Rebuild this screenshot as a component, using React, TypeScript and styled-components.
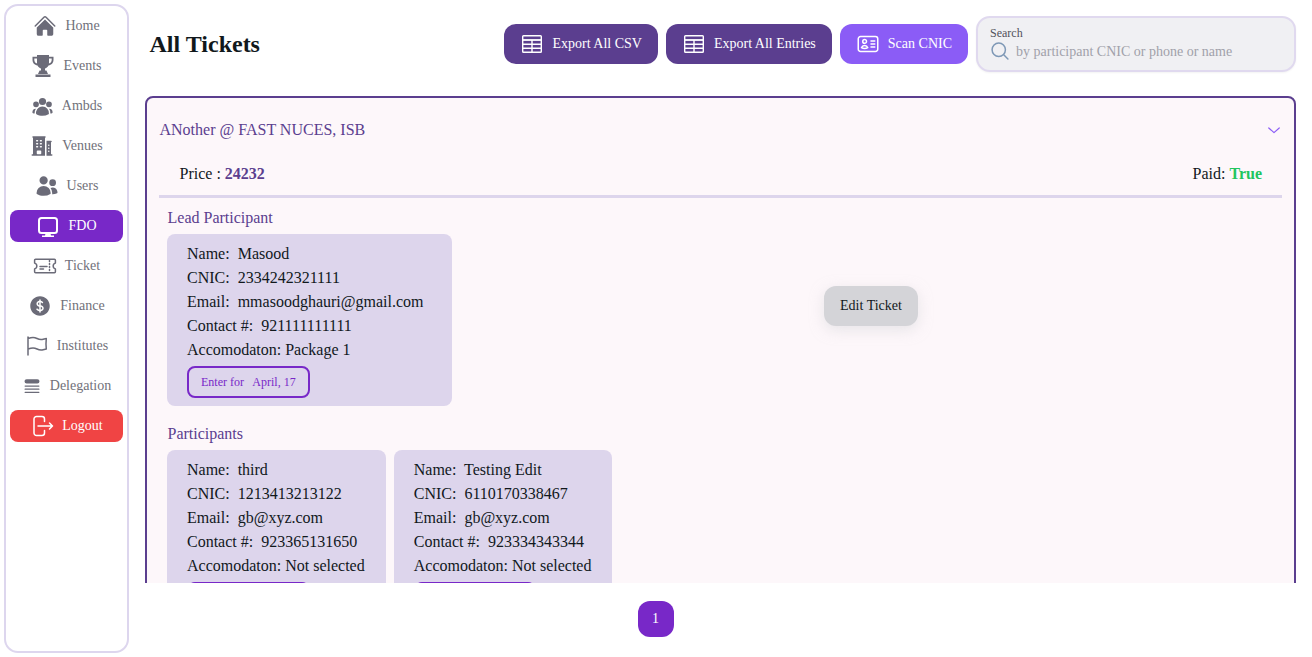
import React from "react";
import styled, { createGlobalStyle } from "styled-components";
import {
  HiHome, HiUserGroup, HiBuildingOffice2, HiUsers, HiCurrencyDollar, HiQueueList,
  HiOutlineFlag, HiOutlineIdentification,
} from "react-icons/hi2";

const Global = createGlobalStyle`
  html, body { margin: 0; padding: 0; background: #fff; }
  body { font-family: "Liberation Serif", "Times New Roman", serif; color: #11181c; }
  * { box-sizing: border-box; }
`;

const Page = styled.div`
  display: flex;
  width: 1312px;
  height: 657px;
  overflow: hidden;
`;

const Sidebar = styled.nav`
  width: 125px;
  height: 649px;
  margin: 4px 0 0 4px;
  padding: 4px;
  border: 2px solid #ddd6ee;
  border-radius: 14px;
  display: flex;
  flex-direction: column;
  gap: 8px;
  flex-shrink: 0;
`;

const NavItem = styled.a<{ $bg?: string; $icon?: number }>`
  height: 32px;
  border-radius: 8px;
  display: flex;
  align-items: center;
  justify-content: center;
  gap: 8px;
  font-size: 14px;
  background: ${(p) => p.$bg ?? "transparent"};
  color: ${(p) => (p.$bg ? "#fff" : "#71717a")};
  svg {
    width: ${(p) => p.$icon ?? 24}px;
    height: ${(p) => p.$icon ?? 24}px;
    flex-shrink: 0;
    color: ${(p) => (p.$bg ? "#fff" : "#6b6b78")};
  }
`;

const Main = styled.main`
  flex: 1;
  min-width: 0;
  display: flex;
  flex-direction: column;
  padding: 16px 16px 0 16px;
`;

const Header = styled.header`
  height: 56px;
  margin-bottom: 24px;
  display: flex;
  align-items: center;
  padding-left: 4.5px;
  gap: 8px;
  flex-shrink: 0;
`;

const Title = styled.h1`
  margin: 0 auto 0 0;
  font-size: 24px;
  font-weight: 700;
  line-height: 32px;
`;

const HeadButton = styled.button<{ $bg: string }>`
  height: 40px;
  padding: 0 16px;
  border: 0;
  border-radius: 12px;
  background: ${(p) => p.$bg};
  color: #fff;
  font: 14px "Liberation Serif", serif;
  display: flex;
  align-items: center;
  gap: 8px;
  svg { width: 24px; height: 24px; flex-shrink: 0; }
`;

const Search = styled.div`
  width: 320px;
  height: 56px;
  padding: 8px 12px;
  border: 2px solid #e0d9ef;
  border-radius: 14px;
  background: #f0f0f3;
  box-shadow: 0 1px 2px rgba(0, 0, 0, 0.05);
  display: flex;
  flex-direction: column;
`;

const SearchLabel = styled.label`
  font-size: 12px;
  line-height: 14px;
  color: #52525b;
`;

const SearchRow = styled.div`
  display: flex;
  align-items: center;
  gap: 6px;
  height: 20px;
  margin-top: 2px;
  font-size: 14px;
  color: #a1a1aa;
  svg { width: 20px; height: 20px; color: #7e98b6; flex-shrink: 0; margin-top: -2px; }
`;

const Scroller = styled.div`
  height: 487px;
  overflow: hidden;
  flex-shrink: 0;
`;

const Card = styled.section`
  border: 2px solid #5b3e8f;
  border-radius: 8px;
  background: #fdf7fa;
  padding: 8px 12px 8px 12px;
`;

const CardTitle = styled.div`
  height: 48px;
  padding-left: 0.5px;
  display: flex;
  align-items: center;
  justify-content: space-between;
  color: #5b3e8f;
  font-size: 16px;
  svg { width: 14px; height: 14px; color: #8b5cf6; margin-right: 1px; }
`;

const PriceRow = styled.div`
  display: flex;
  justify-content: space-between;
  padding: 8px 20px 9px 20.5px;
  font-size: 16px;
  line-height: 24px;
  border-bottom: 3px solid #ddd5ec;
`;

const Strong = styled.b<{ $c: string }>`
  color: ${(p) => p.$c};
`;

const LeadRow = styled.div`
  display: flex;
  align-items: center;
  margin-top: 8px;
`;

const Block = styled.div`
  padding: 0 8px;
`;

const ParticipantsBlock = styled(Block)`
  margin-top: 16px;
`;

const BlockTitle = styled.h3`
  margin: 0 0 4px 0.5px;
  font-size: 16px;
  font-weight: 400;
  line-height: 24px;
  color: #5b3e8f;
`;

const EditSlot = styled.div`
  flex: 1;
  display: flex;
  justify-content: center;
`;

const EditButton = styled.button`
  height: 40px;
  padding: 0 16px;
  border: 0;
  border-radius: 12px;
  background: #d4d4d8;
  color: #11181c;
  font: 14px "Liberation Serif", serif;
  box-shadow: 0 4px 14px rgba(212, 212, 216, 0.5);
`;

const PeopleRow = styled.div`
  display: flex;
  gap: 8px;
`;

const Person = styled.div<{ $minWidth?: number }>`
  min-width: ${(p) => p.$minWidth ?? 0}px;
  padding: 8px 21px 8px 20px;
  border-radius: 8px;
  background: #ddd5ec;
  font-size: 16px;
  line-height: 24px;
`;

const Line = styled.div`
  white-space: pre;
`;

const EnterButton = styled.button`
  display: block;
  height: 32px;
  margin-top: 4px;
  padding: 0 12px;
  border: 2px solid #7828c8;
  border-radius: 8px;
  background: transparent;
  color: #7828c8;
  font: 12px "Liberation Serif", serif;
  white-space: pre;
`;

const Pager = styled.div`
  height: 74px;
  display: flex;
  justify-content: center;
  padding: 18px 130px 0 0;
`;

const PageButton = styled.button`
  width: 36px;
  height: 36px;
  border: 0;
  border-radius: 12px;
  background: #7828c8;
  color: #fff;
  font: 14px "Liberation Serif", serif;
`;

const TableIcon = () => (
  <svg viewBox="0 0 24 24" fill="none" stroke="currentColor" strokeWidth="1.4">
    <rect x="2.7" y="3.7" width="18.6" height="16.6" rx="0.8" />
    <path d="M2.7 8h18.6" strokeWidth="1.8" />
    <path d="M2.7 12.2h18.6M2.7 16.2h18.6M12 8v12" />
  </svg>
);

const TrophyIcon = () => (
  <svg viewBox="0 0 24 24" fill="currentColor">
    <path
      fillRule="evenodd"
      d="M6 1h12v1.800h4.500v3c0 3.100-2 5.400-5 5.700-.7 1.500-1.900 2.500-3.500 2.900v2.100h1.400l1.600 3.500H7l1.600-3.500H10v-2.100c-1.600-.4-2.800-1.400-3.500-2.900-3-.3-5-2.600-5-5.700v-3H6V1zM3.300 4.600v1.200c0 1.900 1 3.300 2.800 3.800-.1-.6-.1-1.200-.1-1.800V4.600H3.300zm17.400 0H18v3.200c0 .6 0 1.200-.1 1.800 1.800-.5 2.800-1.900 2.800-3.800V4.600z"
    />
    <path d="M4.500 20.500h15V23h-15z" />
  </svg>
);

const MonitorIcon = () => (
  <svg viewBox="0 0 24 24" fill="none" stroke="currentColor" strokeWidth="2">
    <rect x="3" y="4" width="18" height="15" rx="2.5" />
    <path d="M9.500 19.500h5l.5 2h3v1.500H6v-1.500h3z" fill="currentColor" stroke="none" />
  </svg>
);

const TicketIcon = () => (
  <svg viewBox="0 0 24 24" fill="none" stroke="currentColor" strokeWidth="1.5" strokeLinejoin="round" strokeLinecap="round">
    <path d="M2.600 5.200h18.800a1 1 0 0 1 1 1v2.900a3 3 0 0 0 0 5.800v2.900a1 1 0 0 1-1 1H2.600a1 1 0 0 1-1-1v-2.900a3 3 0 0 0 0-5.800V6.200a1 1 0 0 1 1-1z" />
    <path d="M7 12.500h7M7 15h3.500M16.500 6.500v1M16.500 9.500v1M16.500 12.500v1M16.500 15.500v1" />
  </svg>
);

const LogoutIcon = () => (
  <svg viewBox="0 0 24 24" fill="none" stroke="currentColor" strokeWidth="1.5" strokeLinecap="round" strokeLinejoin="round">
    <path d="M14.500 7.500V5A2.500 2.500 0 0 0 12 2.500H6.500A2.500 2.500 0 0 0 4 5v14a2.500 2.500 0 0 0 2.500 2.500H12a2.500 2.500 0 0 0 2.500-2.500v-2.500" />
    <path d="M8 12h14.500M19.500 9l3 3-3 3" />
  </svg>
);

const SearchIcon = () => (
  <svg viewBox="0 0 24 24" fill="none" stroke="currentColor" strokeWidth="1.8" strokeLinecap="round">
    <circle cx="10.500" cy="10.500" r="8" />
    <path d="M16.500 16.500l5 5" />
  </svg>
);

const ChevronIcon = () => (
  <svg viewBox="0 0 24 24" fill="none" stroke="currentColor" strokeWidth="2" strokeLinecap="round" strokeLinejoin="round">
    <path d="M3 8.500l9 8 9-8" />
  </svg>
);

const nav: { label: string; icon: React.ReactNode; bg?: string; size?: number }[] = [
  { label: "Home", icon: <HiHome /> },
  { label: "Events", icon: <TrophyIcon /> },
  { label: "Ambds", icon: <HiUserGroup />, size: 23 },
  { label: "Venues", icon: <HiBuildingOffice2 /> },
  { label: "Users", icon: <HiUsers /> },
  { label: "FDO", icon: <MonitorIcon />, bg: "#7828c8" },
  { label: "Ticket", icon: <TicketIcon /> },
  { label: "Finance", icon: <HiCurrencyDollar /> },
  { label: "Institutes", icon: <HiOutlineFlag /> },
  { label: "Delegation", icon: <HiQueueList />, size: 20 },
  { label: "Logout", icon: <LogoutIcon />, bg: "#f04444" },
];

type P = { name: string; cnic: string; email: string; contact: string; acc: string };

const PersonCard = ({ p, minWidth }: { p: P; minWidth?: number }) => (
  <Person $minWidth={minWidth}>
    <Line>{`Name:  ${p.name}`}</Line>
    <Line>{`CNIC:  ${p.cnic}`}</Line>
    <Line>{`Email:  ${p.email}`}</Line>
    <Line>{`Contact #:  ${p.contact}`}</Line>
    <Line>{`Accomodaton: ${p.acc}`}</Line>
    <EnterButton>{"Enter for   April, 17"}</EnterButton>
  </Person>
);

export default function App() {
  return (
    <Page>
      <Global />
      <Sidebar>
        {nav.map((n) => (
          <NavItem key={n.label} $bg={n.bg} $icon={n.size}>
            {n.icon}
            {n.label}
          </NavItem>
        ))}
      </Sidebar>
      <Main>
        <Header>
          <Title>All Tickets</Title>
          <HeadButton $bg="#5b3e8f"><TableIcon />Export All CSV</HeadButton>
          <HeadButton $bg="#5b3e8f"><TableIcon />Export All Entries</HeadButton>
          <HeadButton $bg="#8b5cf6"><HiOutlineIdentification />Scan CNIC</HeadButton>
          <Search>
            <SearchLabel>Search</SearchLabel>
            <SearchRow><SearchIcon />by participant CNIC or phone or name</SearchRow>
          </Search>
        </Header>
        <Scroller>
          <Card>
            <CardTitle>ANother @ FAST NUCES, ISB<ChevronIcon /></CardTitle>
            <PriceRow>
              <span>Price : <Strong $c="#5b3e8f">24232</Strong></span>
              <span>Paid: <Strong $c="#22c55e">True</Strong></span>
            </PriceRow>
            <LeadRow>
              <Block>
                <BlockTitle>Lead Participant</BlockTitle>
                <PersonCard minWidth={285} p={{ name: "Masood", cnic: "2334242321111", email: "mmasoodghauri@gmail.com", contact: "921111111111", acc: "Package 1" }} />
              </Block>
              <EditSlot><EditButton>Edit Ticket</EditButton></EditSlot>
            </LeadRow>
            <ParticipantsBlock>
              <BlockTitle>Participants</BlockTitle>
              <PeopleRow>
                <PersonCard p={{ name: "third", cnic: "1213413213122", email: "gb@xyz.com", contact: "923365131650", acc: "Not selected" }} />
                <PersonCard p={{ name: "Testing Edit", cnic: "6110170338467", email: "gb@xyz.com", contact: "923334343344", acc: "Not selected" }} />
              </PeopleRow>
            </ParticipantsBlock>
          </Card>
        </Scroller>
        <Pager><PageButton>1</PageButton></Pager>
      </Main>
    </Page>
  );
}
